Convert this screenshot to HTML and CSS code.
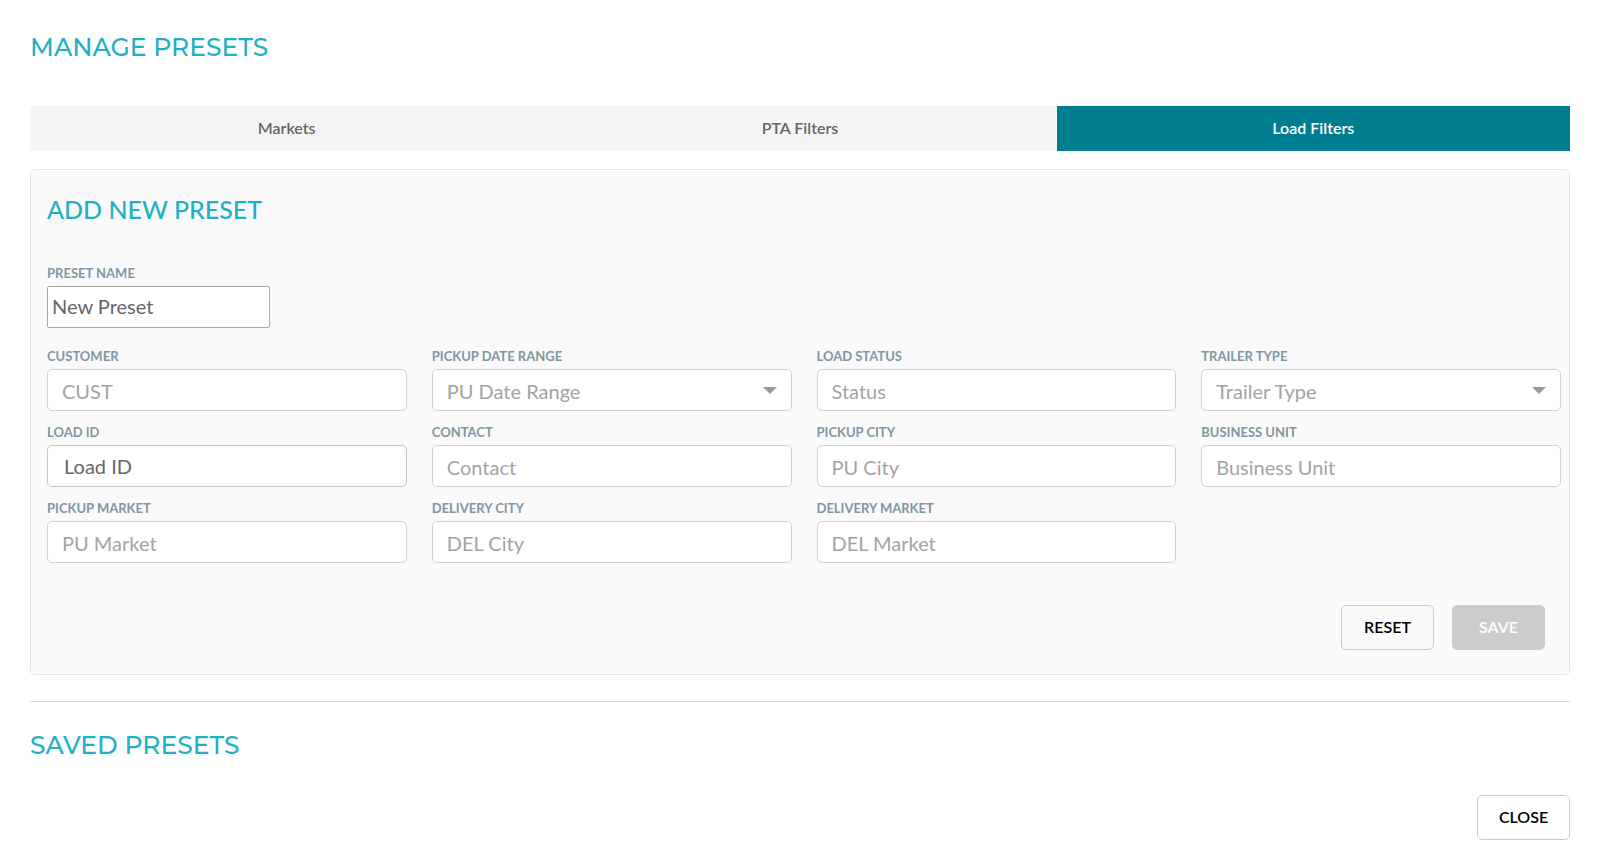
FILE: index.html
```html
<!DOCTYPE html>
<html lang="en">
<head>
    <meta charset="UTF-8">
    <meta name="viewport" content="width=device-width, initial-scale=1.0">
    <title>Manage Presets</title>
    <link rel="stylesheet" href="styles.css">
</head>
<body>

    <h1 class="page-title">MANAGE PRESETS</h1>

    <div class="tabs" role="tablist">
        <button type="button" class="tab" role="tab" aria-selected="false">Markets</button>
        <button type="button" class="tab" role="tab" aria-selected="false">PTA Filters</button>
        <button type="button" class="tab active" role="tab" aria-selected="true">Load Filters</button>
    </div>

    <form class="panel">
        <h2 class="panel-title">ADD NEW PRESET</h2>

        <div class="field preset-name">
            <label for="presetName">PRESET NAME</label>
            <input type="text" id="presetName" value="New Preset">
        </div>

        <div class="filters">
            <div class="field">
                <label for="customer">CUSTOMER</label>
                <input type="text" id="customer" placeholder="CUST">
            </div>
            <div class="field">
                <label for="pickupDate">PICKUP DATE RANGE</label>
                <div class="select-wrap">
                    <select id="pickupDate">
                        <option>PU Date Range</option>
                    </select>
                </div>
            </div>
            <div class="field">
                <label for="loadStatus">LOAD STATUS</label>
                <input type="text" id="loadStatus" placeholder="Status">
            </div>
            <div class="field">
                <label for="trailerType">TRAILER TYPE</label>
                <div class="select-wrap">
                    <select id="trailerType">
                        <option>Trailer Type</option>
                    </select>
                </div>
            </div>

            <div class="field load-id">
                <label for="loadId">LOAD ID</label>
                <input type="text" id="loadId" placeholder="Load ID">
            </div>
            <div class="field">
                <label for="contact">CONTACT</label>
                <input type="text" id="contact" placeholder="Contact">
            </div>
            <div class="field">
                <label for="pickupCity">PICKUP CITY</label>
                <input type="text" id="pickupCity" placeholder="PU City">
            </div>
            <div class="field">
                <label for="businessUnit">BUSINESS UNIT</label>
                <input type="text" id="businessUnit" placeholder="Business Unit">
            </div>

            <div class="field">
                <label for="pickupMarket">PICKUP MARKET</label>
                <input type="text" id="pickupMarket" placeholder="PU Market">
            </div>
            <div class="field">
                <label for="deliveryCity">DELIVERY CITY</label>
                <input type="text" id="deliveryCity" placeholder="DEL City">
            </div>
            <div class="field">
                <label for="deliveryMarket">DELIVERY MARKET</label>
                <input type="text" id="deliveryMarket" placeholder="DEL Market">
            </div>
        </div>

        <div class="actions">
            <button type="reset" class="btn">RESET</button>
            <button type="submit" class="btn btn-save" disabled>SAVE</button>
        </div>
    </form>

    <hr>

    <h2 class="page-title">SAVED PRESETS</h2>

    <div class="footer">
        <button type="button" class="btn">CLOSE</button>
    </div>

</body>
</html>
```

FILE: styles.css
```css
* {
    box-sizing: border-box;
}
body {
    font-family: Lato, 'Liberation Sans', sans-serif;
    margin: 0;
    padding: 30px 30px 26px;
    background: #fff;
    color: #666;
}
.page-title {
    margin: 0;
    font-family: Montserrat, Inter, 'Liberation Sans', sans-serif;
    font-size: 25px;
    font-weight: 500;
    line-height: 34px;
    color: #1fb0c3;
}

/* Tabs */
.tabs {
    display: flex;
    margin: 42px 0 18px;
    background: #f5f5f5;
}
.tab {
    flex: 1;
    height: 45px;
    padding: 0 0 2px;
    border: none;
    background: none;
    color: #666;
    font-family: inherit;
    font-size: 16px;
    font-weight: 600;
    cursor: pointer;
}
.tab.active {
    background: #007d8f;
    color: #fff;
}

/* Add new preset */
.panel {
    padding: 23px 8px 24px 16px;
    background: #fafafa;
    border: 1px solid #e0e5e5;
    border-radius: 5px;
}
.panel-title {
    margin: 0 0 40px;
    font-size: 25px;
    font-weight: 500;
    line-height: 32px;
    color: #1fb0c3;
}
.field label {
    display: block;
    margin-bottom: 5px;
    font-size: 13px;
    font-weight: bold;
    line-height: 16px;
    color: #8097a2;
}
.field input,
.field select {
    display: block;
    width: 100%;
    height: 42px;
    padding: 2px 14px 0;
    border: 1px solid #d2d2d2;
    border-radius: 5px;
    background: #fff;
    color: #666;
    font-family: inherit;
    font-size: 20px;
}
.field select {
    appearance: none;
    color: #a3a3a3;
}
.field input::placeholder {
    color: #a3a3a3;
    opacity: 1;
}
.field.preset-name {
    width: 223px;
    margin-bottom: 20px;
}
.preset-name input {
    padding: 0 4px 2px;
    border-color: #a9a9a9;
    border-radius: 2px;
}
.load-id input {
    padding: 0 16px;
    border-color: #c6c6c6;
}
.load-id input::placeholder {
    color: #666;
}
.select-wrap {
    position: relative;
}
.select-wrap::after {
    content: '';
    position: absolute;
    top: 18px;
    right: 15px;
    border: 7px solid transparent;
    border-top-color: #999;
    border-bottom: none;
    pointer-events: none;
}
.filters {
    display: grid;
    grid-template-columns: repeat(4, 1fr);
    gap: 13px 25px;
}
.actions {
    display: flex;
    justify-content: flex-end;
    gap: 18px;
    margin: 42px 16px 0 0;
}
.btn {
    width: 93px;
    height: 45px;
    padding: 0 0 2px;
    border: 1px solid #ccc;
    border-radius: 5px;
    background: none;
    color: #000;
    font-family: inherit;
    font-size: 16px;
    font-weight: 600;
    cursor: pointer;
}
.btn-save {
    background: #ccc;
    color: #fff;
    cursor: default;
}

hr {
    margin: 26px 0;
    border: none;
    border-top: 1px solid #d8d8d8;
}
.footer {
    display: flex;
    justify-content: flex-end;
    margin-top: 33px;
}
```
